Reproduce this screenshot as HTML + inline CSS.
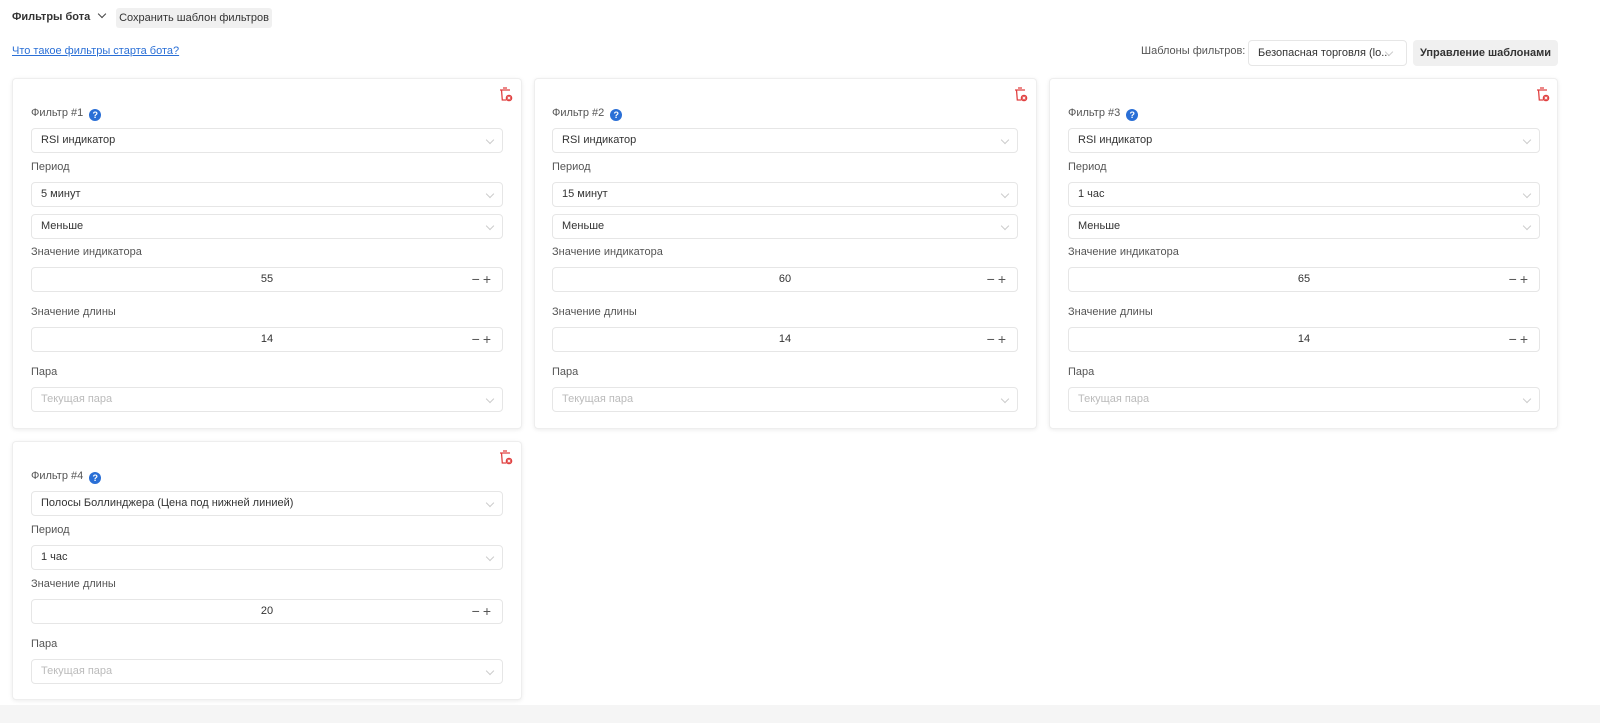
<!DOCTYPE html>
<html><head><meta charset="utf-8"><style>
*{box-sizing:border-box;margin:0;padding:0}
body{width:1600px;height:723px;background:#fff;font-family:"Liberation Sans",sans-serif;font-size:11px;color:#333;position:relative;overflow:hidden;white-space:nowrap}
.a{position:absolute}
.card{position:absolute;border:1px solid #eee;border-radius:4px;box-shadow:0 1px 4px rgba(0,0,0,.08);background:#fff}
.in{position:absolute;height:25px;border:1px solid #e6e6e6;border-radius:4px;background:#fff;padding-left:9px;line-height:23px;font-size:11px;color:#333}
.in.ph{color:#bbb}
.chev{position:absolute;right:9px;top:8px;width:6px;height:6px;border-right:1px solid #ccc;border-bottom:1px solid #ccc;transform:rotate(45deg)}
.num{text-align:center;padding:0}
.pm{position:absolute;right:8px;top:0;font-size:14px;color:#555;letter-spacing:3px}
.lbl{position:absolute;font-size:11px;color:#555}
.q{display:inline-block;width:12px;height:12px;border-radius:50%;background:#2a6fd6;color:#fff;font-size:9px;text-align:center;line-height:12px;font-weight:bold;margin-left:6px;vertical-align:-2px}
.trash{position:absolute;width:14px;height:16px}
</style></head><body>
<div class="a" style="left:12px;top:11px;font-weight:bold;font-size:11px;color:#333">Фильтры бота <span style="display:inline-block;width:6px;height:6px;border-right:1px solid #444;border-bottom:1px solid #444;transform:rotate(45deg);margin-left:6px;vertical-align:3px"></span></div>
<div class="a" style="left:116px;top:8px;width:156px;height:20px;background:#f0f0f0;border-radius:3px;line-height:20px;text-align:center;color:#333">Сохранить шаблон фильтров</div>
<div class="a" style="left:12px;top:45px;color:#2a6fd6;text-decoration:underline;font-size:11px">Что такое фильтры старта бота?</div>
<div class="a" style="left:1141px;top:45px;color:#555;font-size:11px">Шаблоны фильтров:</div>
<div class="in" style="left:1248px;top:40px;width:159px;height:26px;line-height:24px">Безопасная торговля (lo...<span class="chev" style="right:14px"></span></div>
<div class="a" style="left:1413px;top:40px;width:145px;height:26px;background:#f0f0f0;border-radius:4px;line-height:26px;text-align:center;font-weight:bold;color:#333">Управление шаблонами</div>

<div class="card" style="left:12px;top:78px;width:510px;height:351px"></div>
<div class="card" style="left:534px;top:78px;width:503px;height:351px"></div>
<div class="card" style="left:1049px;top:78px;width:509px;height:351px"></div>
<div class="card" style="left:12px;top:441px;width:510px;height:259px"></div>

<svg class="trash" style="left:499px;top:86px" viewBox="0 0 14 16"><g fill="none" stroke="#e04040" stroke-width="1.3"><path d="M4 2h4M1 4h10M2.5 4l.8 10h4"/></g><circle cx="10" cy="12" r="3.3" fill="#e04040"/><path d="M8.7 10.7l2.6 2.6M11.3 10.7l-2.6 2.6" stroke="#fff" stroke-width="1"/></svg>
<svg class="trash" style="left:1014px;top:86px" viewBox="0 0 14 16"><g fill="none" stroke="#e04040" stroke-width="1.3"><path d="M4 2h4M1 4h10M2.5 4l.8 10h4"/></g><circle cx="10" cy="12" r="3.3" fill="#e04040"/><path d="M8.7 10.7l2.6 2.6M11.3 10.7l-2.6 2.6" stroke="#fff" stroke-width="1"/></svg>
<svg class="trash" style="left:1536px;top:86px" viewBox="0 0 14 16"><g fill="none" stroke="#e04040" stroke-width="1.3"><path d="M4 2h4M1 4h10M2.5 4l.8 10h4"/></g><circle cx="10" cy="12" r="3.3" fill="#e04040"/><path d="M8.7 10.7l2.6 2.6M11.3 10.7l-2.6 2.6" stroke="#fff" stroke-width="1"/></svg>
<svg class="trash" style="left:499px;top:449px" viewBox="0 0 14 16"><g fill="none" stroke="#e04040" stroke-width="1.3"><path d="M4 2h4M1 4h10M2.5 4l.8 10h4"/></g><circle cx="10" cy="12" r="3.3" fill="#e04040"/><path d="M8.7 10.7l2.6 2.6M11.3 10.7l-2.6 2.6" stroke="#fff" stroke-width="1"/></svg>

<div class="lbl" style="left:31px;top:107px">Фильтр #1<span class="q">?</span></div>
<div class="in" style="left:31px;top:128px;width:472px">RSI индикатор<span class="chev"></span></div>
<div class="lbl" style="left:31px;top:161px">Период</div>
<div class="in" style="left:31px;top:182px;width:472px">5 минут<span class="chev"></span></div>
<div class="in" style="left:31px;top:214px;width:472px">Меньше<span class="chev"></span></div>
<div class="lbl" style="left:31px;top:246px">Значение индикатора</div>
<div class="in num" style="left:31px;top:267px;width:472px">55<span class="pm">−+</span></div>
<div class="lbl" style="left:31px;top:306px">Значение длины</div>
<div class="in num" style="left:31px;top:327px;width:472px">14<span class="pm">−+</span></div>
<div class="lbl" style="left:31px;top:366px">Пара</div>
<div class="in ph" style="left:31px;top:387px;width:472px">Текущая пара<span class="chev"></span></div>

<div class="lbl" style="left:552px;top:107px">Фильтр #2<span class="q">?</span></div>
<div class="in" style="left:552px;top:128px;width:466px">RSI индикатор<span class="chev"></span></div>
<div class="lbl" style="left:552px;top:161px">Период</div>
<div class="in" style="left:552px;top:182px;width:466px">15 минут<span class="chev"></span></div>
<div class="in" style="left:552px;top:214px;width:466px">Меньше<span class="chev"></span></div>
<div class="lbl" style="left:552px;top:246px">Значение индикатора</div>
<div class="in num" style="left:552px;top:267px;width:466px">60<span class="pm">−+</span></div>
<div class="lbl" style="left:552px;top:306px">Значение длины</div>
<div class="in num" style="left:552px;top:327px;width:466px">14<span class="pm">−+</span></div>
<div class="lbl" style="left:552px;top:366px">Пара</div>
<div class="in ph" style="left:552px;top:387px;width:466px">Текущая пара<span class="chev"></span></div>

<div class="lbl" style="left:1068px;top:107px">Фильтр #3<span class="q">?</span></div>
<div class="in" style="left:1068px;top:128px;width:472px">RSI индикатор<span class="chev"></span></div>
<div class="lbl" style="left:1068px;top:161px">Период</div>
<div class="in" style="left:1068px;top:182px;width:472px">1 час<span class="chev"></span></div>
<div class="in" style="left:1068px;top:214px;width:472px">Меньше<span class="chev"></span></div>
<div class="lbl" style="left:1068px;top:246px">Значение индикатора</div>
<div class="in num" style="left:1068px;top:267px;width:472px">65<span class="pm">−+</span></div>
<div class="lbl" style="left:1068px;top:306px">Значение длины</div>
<div class="in num" style="left:1068px;top:327px;width:472px">14<span class="pm">−+</span></div>
<div class="lbl" style="left:1068px;top:366px">Пара</div>
<div class="in ph" style="left:1068px;top:387px;width:472px">Текущая пара<span class="chev"></span></div>

<div class="lbl" style="left:31px;top:470px">Фильтр #4<span class="q">?</span></div>
<div class="in" style="left:31px;top:491px;width:472px">Полосы Боллинджера (Цена под нижней линией)<span class="chev"></span></div>
<div class="lbl" style="left:31px;top:524px">Период</div>
<div class="in" style="left:31px;top:545px;width:472px">1 час<span class="chev"></span></div>
<div class="lbl" style="left:31px;top:578px">Значение длины</div>
<div class="in num" style="left:31px;top:599px;width:472px">20<span class="pm">−+</span></div>
<div class="lbl" style="left:31px;top:638px">Пара</div>
<div class="in ph" style="left:31px;top:659px;width:472px">Текущая пара<span class="chev"></span></div>

<div class="a" style="left:0;top:705px;width:1600px;height:18px;background:#f5f5f5"></div>
</body></html>
